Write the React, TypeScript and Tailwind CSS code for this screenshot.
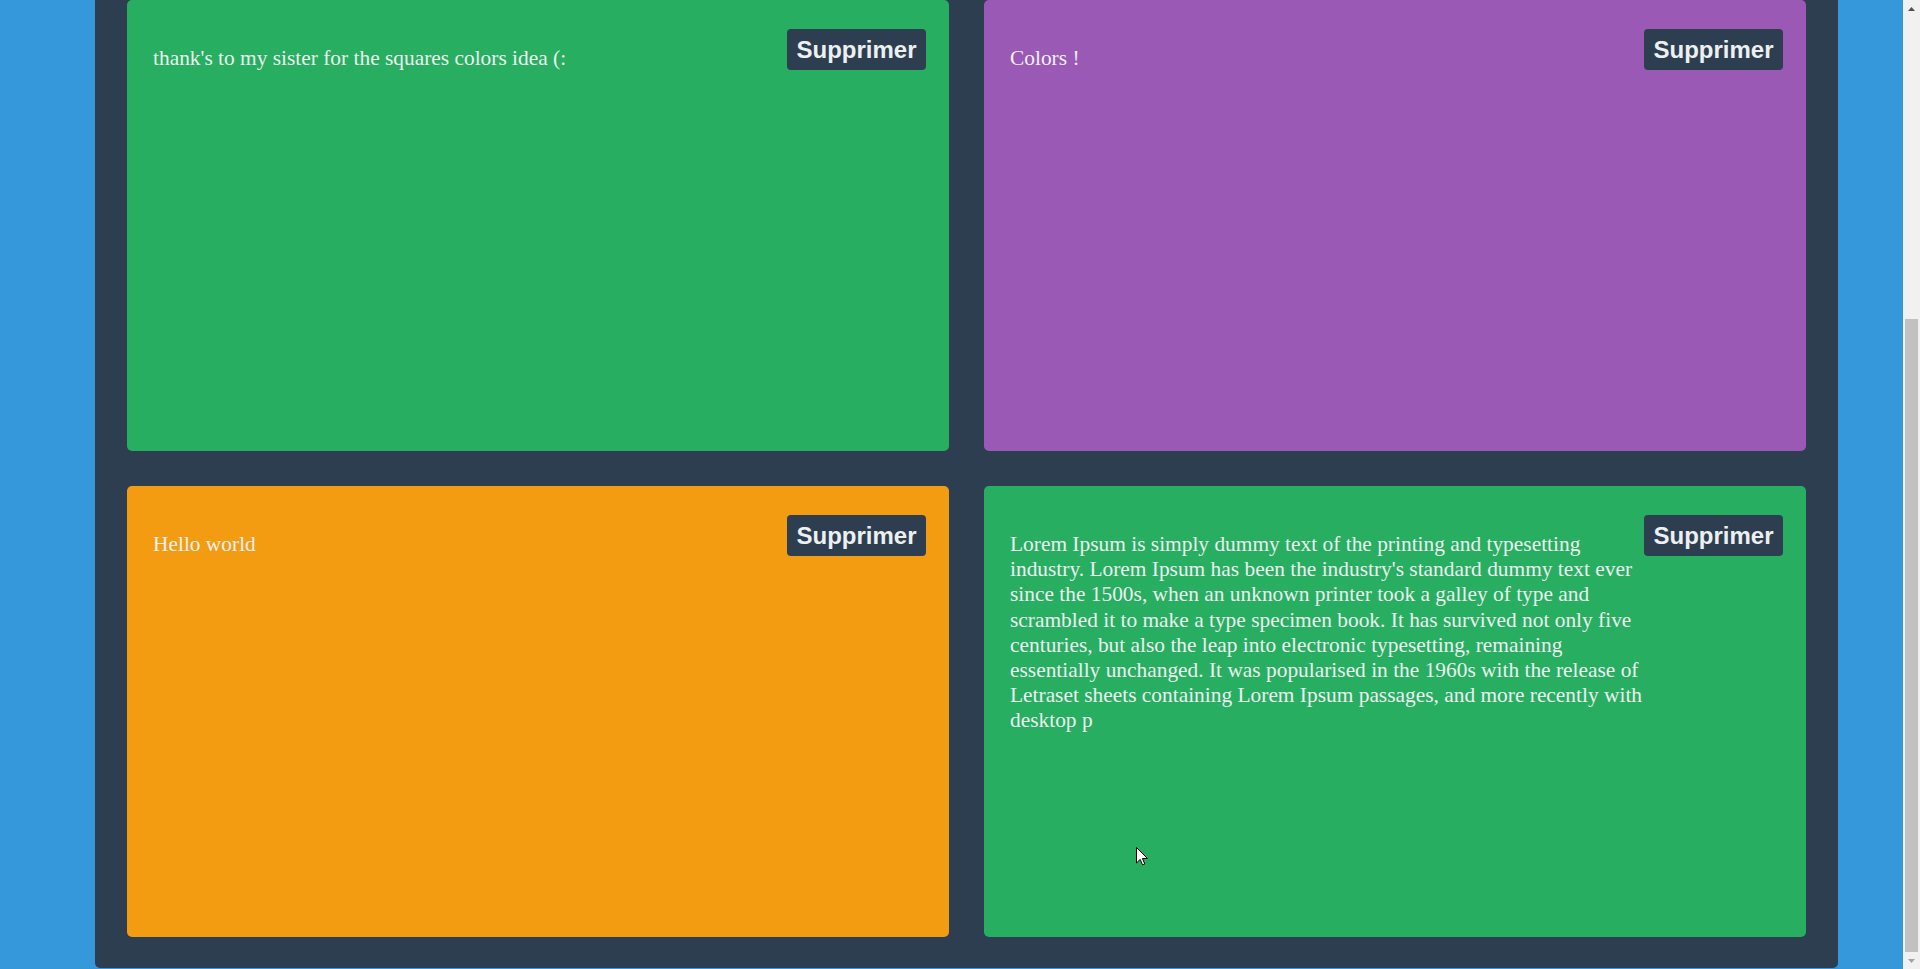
import React from "react";

type Note = { id: number; text: string; color: string };

const notes: Note[] = [
  { id: 1, text: "thank's to my sister for the squares colors idea (:", color: "bg-[#27ae60]" },
  { id: 2, text: "Colors !", color: "bg-[#9b59b6]" },
  { id: 3, text: "Hello world", color: "bg-[#f39c12]" },
  {
    id: 4,
    text:
      "Lorem Ipsum is simply dummy text of the printing and typesetting industry. Lorem Ipsum has been the industry's standard dummy text ever since the 1500s, when an unknown printer took a galley of type and scrambled it to make a type specimen book. It has survived not only five centuries, but also the leap into electronic typesetting, remaining essentially unchanged. It was popularised in the 1960s with the release of Letraset sheets containing Lorem Ipsum passages, and more recently with desktop p",
    color: "bg-[#27ae60]",
  },
];

function NoteCard({ note }: { note: Note }) {
  return (
    <div className={`${note.color} h-[451px] rounded-[5px] pl-[26px] pr-[23px] pt-[29px] flex items-start`}>
      <p className="flex-1 mt-[17px] text-[21.4px] leading-[25.2px] text-[#ecf0f1] font-['Liberation_Serif',serif]">
        {note.text}
      </p>
      <button className="shrink-0 h-[41px] w-[139px] rounded-[4px] bg-[#2c3e50] text-[#ecf0f1] text-[24px] font-bold font-['Liberation_Sans',Arial,sans-serif] leading-none">
        Supprimer
      </button>
    </div>
  );
}

function Scrollbar() {
  return (
    <div className="w-[17px] h-full bg-[#f1f1f1] flex flex-col">
      <div className="h-[17px] flex items-center justify-center">
        <svg width="7" height="4" viewBox="0 0 7 4">
          <path d="M3.5 0L7 4H0z" fill="#505050" />
        </svg>
      </div>
      <div className="flex-1 flex flex-col justify-end">
        <div className="h-[633px] ml-[2px] w-[13px] bg-[#c1c1c1]" />
      </div>
      <div className="h-[17px] flex items-center justify-center">
        <svg width="7" height="4" viewBox="0 0 7 4">
          <path d="M0 0H7L3.5 4z" fill="#a3a3a3" />
        </svg>
      </div>
    </div>
  );
}

export default function App() {
  return (
    <div className="h-[969px] w-[1920px] overflow-hidden flex relative">
      <div className="flex-1 bg-[#3498db]">
        <div className="ml-[95px] w-[1743px] bg-[#2c3e50] rounded-b-[5px] px-[32px] pb-[31px] grid grid-cols-2 gap-[35px]">
          {notes.map((note) => (
            <NoteCard key={note.id} note={note} />
          ))}
        </div>
      </div>
      <Scrollbar />
      <svg className="absolute left-[1136px] top-[847px]" width="12" height="19" viewBox="0 0 12 19">
        <path d="M0.5 0.5V16L4.2 12.4L6.6 18L8.8 17L6.4 11.5H11.5Z" fill="#fff" stroke="#000" strokeWidth="1" />
      </svg>
    </div>
  );
}
